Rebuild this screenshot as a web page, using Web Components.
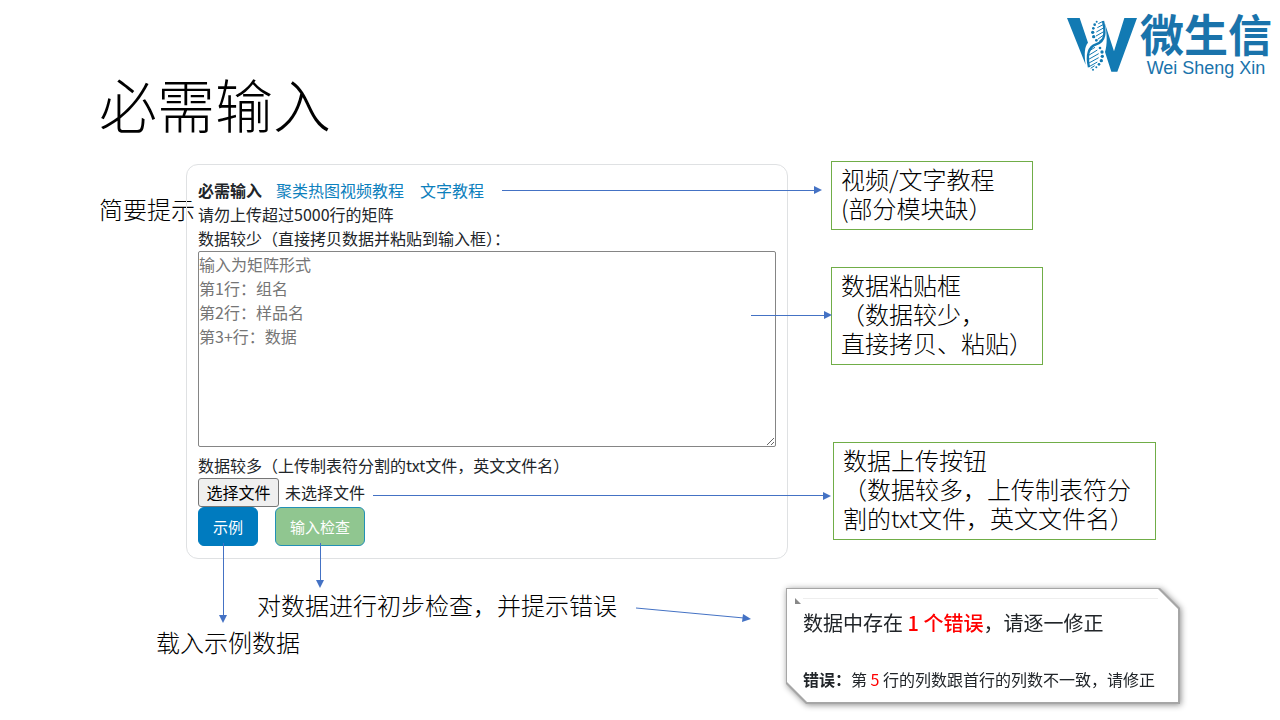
<!DOCTYPE html>
<html lang="zh-CN">
<head>
<meta charset="utf-8">
<meta name="viewport" content="width=device-width, initial-scale=1">
<title>必需输入</title>
<style>
  body { margin: 0; background: #fff; color: #000; font-family: "Noto Sans CJK SC", "Noto Sans", sans-serif; }
</style>
</head>
<body>
<tutorial-slide></tutorial-slide>

<template id="brand-logo">
  <style>
    :host { display: flex; color: #1a73ab; }
    svg { width: 76px; height: 62px; flex: none; margin-top: 1px; }
    .names { display: flex; flex-direction: column; align-items: center; }
    .cn { font-size: 44px; line-height: 40px; font-weight: 700; white-space: nowrap; }
    .en { font: 18px/30px "Liberation Sans", Arial, sans-serif; white-space: nowrap; }
  </style>
  <svg viewBox="0 0 228 186" aria-hidden="true">
    <g fill="#127ab3">
      <path d="M9 12H47L72 86C62 97 60 118 65 152Z"/>
      <path d="M181 12H219L160 173H142L123 114C130 92 130 60 122 26L150 112Z"/>
      <circle cx="98" cy="23" r="3"/><circle cx="92" cy="32" r="4"/><circle cx="88" cy="43" r="4"/><circle cx="86" cy="55" r="5"/><circle cx="89" cy="68" r="5"/><circle cx="97" cy="79" r="4"/>
      <circle cx="108" cy="102" r="4"/><circle cx="114" cy="114" r="5"/><circle cx="115" cy="127" r="5"/><circle cx="112" cy="140" r="5"/><circle cx="105" cy="151" r="4"/><circle cx="97" cy="160" r="3"/><circle cx="87" cy="167" r="3"/>
    </g>
    <path fill="none" stroke="#127ab3" stroke-width="7" d="M117 21C124 52 126 82 96 91C76 98 66 118 75 160"/>
    <g fill="none" stroke="#127ab3" stroke-width="3">
      <path d="M117 22L103 29M119 31L100 41M120 41L97 54M121 52L96 66M119 63L101 76M115 75L106 81"/>
      <path d="M93 100L75 111M100 108L74 124M104 119L74 136M104 131L75 147M100 144L77 157M92 155L80 163"/>
    </g>
  </svg>
  <div class="names"><span class="cn">微生信</span><span class="en">Wei Sheng Xin</span></div>
</template>

<template id="link-arrow">
  <style>
    :host { display: flex; align-items: center; color: #4472c4; pointer-events: none; }
    i { flex: 1; background: currentColor; height: 1px; }
    b { flex: none; border: 4px solid transparent; border-left: 8px solid currentColor; border-right: 0; }
    :host([down]) { flex-direction: column; }
    :host([down]) i { width: 1px; height: auto; }
    :host([down]) b { border: 4px solid transparent; border-top: 8px solid currentColor; border-bottom: 0; }
  </style>
  <i></i><b></b>
</template>

<template id="note-box">
  <style>
    :host { display: block; box-sizing: border-box; border: 1px solid #70ad47; padding: 2px 9px 7px; font-size: 24px; line-height: 29px; font-weight: 300; background: #fff; }
  </style>
  <slot></slot>
</template>

<template id="upload-card">
  <style>
    :host { display: block; box-sizing: border-box; border: 1px solid #dfe1e3; border-radius: 12px; padding: 13px 11px 12px; font-size: 16px; line-height: 24px; color: #212529; }
    .row { display: flex; align-items: center; white-space: nowrap; }
    a { color: #0c80bd; text-decoration: none; }
    .video { margin-left: 14px; }
    .text { margin-left: 16px; }
    .row link-arrow { flex: 1; margin: 0 -46px 0 18px; }
    p, label { display: block; margin: 0; white-space: nowrap; }
    .box { position: relative; display: flex; margin-top: 1px; }
    textarea { box-sizing: border-box; width: 100%; height: 196px; margin: 0; padding: 0; border: 1px solid #858585; border-radius: 2px; font: inherit; background: #fff; outline: 0; }
    textarea::placeholder { color: #757575; }
    .box link-arrow { position: absolute; right: -56px; top: 60px; width: 81px; }
    .filelabel { margin-top: 6px; }
    .file { position: relative; margin-top: 1px; }
    .file input { position: absolute; width: 1px; height: 1px; opacity: 0; margin: 0; }
    .pick { box-sizing: border-box; width: 81px; height: 29px; padding: 0 0 2px; border: 1px solid #767676; border-radius: 3px; background: #efefef; color: #000; font: inherit; }
    output { margin-left: 6px; padding-bottom: 2px; }
    .row.file link-arrow { margin: 4px -55px 0 8px; padding-top: 2px; }
    .actions { display: flex; gap: 17px; }
    .action { position: relative; }
    .action button { box-sizing: border-box; height: 39px; padding: 0 14px; border: 1px solid #007bbd; border-radius: 6px; background: #007bbf; color: #fff; font: inherit; font-size: 15px; }
    .action .check { background: #90c690; border-color: #2390b5; }
    .action link-arrow { position: absolute; left: 21px; top: 36px; height: 80px; }
    .action .short { left: 41px; height: 45px; }
  </style>
  <div class="row"><strong>必需输入</strong><a class="video" href="#video">聚类热图视频教程</a><a class="text" href="#text">文字教程</a><link-arrow></link-arrow></div>
  <p>请勿上传超过5000行的矩阵</p>
  <label for="data">数据较少（直接拷贝数据并粘贴到输入框）：</label>
  <div class="box">
    <textarea id="data" placeholder="输入为矩阵形式&#10;第1行：组名&#10;第2行：样品名&#10;第3+行：数据"></textarea>
    <link-arrow></link-arrow>
  </div>
  <label class="filelabel" for="file">数据较多（上传制表符分割的txt文件，英文文件名）</label>
  <div class="row file">
    <input id="file" type="file" accept=".txt" tabindex="-1">
    <button class="pick" type="button">选择文件</button><output for="file">未选择文件</output><link-arrow></link-arrow>
  </div>
  <div class="actions">
    <div class="action"><button type="button">示例</button><link-arrow down></link-arrow></div>
    <div class="action"><button class="check" type="button">输入检查</button><link-arrow class="short" down></link-arrow></div>
  </div>
</template>

<template id="error-card">
  <style>
    :host { display: block; filter: drop-shadow(1px 1px 3px rgba(0,0,0,.45)); }
    .edge, .face { clip-path: polygon(0 0, calc(100% - 20px) 0, 100% 20px, 100% 100%, 20px 100%, 0 calc(100% - 20px)); }
    .edge { background: #a6a6a6; padding: 1px 2px 2px 1px; }
    .face { background: #fff; padding: 9px 20px 11px 8px; color: #212529; }
    .top { display: flex; gap: 2px; height: 6px; }
    .top i { border-left: 6px solid #888; border-top: 6px solid transparent; }
    .top hr { flex: 1; margin: 0; border: 0; border-top: 1px solid #eee; }
    h2, p { margin: 0 0 0 8px; font-weight: 400; white-space: nowrap; }
    h2 { font-size: 20px; line-height: 30px; margin-top: 4px; }
    p { font-size: 16px; line-height: 24px; margin-top: 29px; }
    em { color: #f00; font-style: normal; }
    h2 em { font-weight: 500; }
  </style>
  <div class="edge"><div class="face">
    <div class="top"><i></i><hr></div>
    <h2>数据中存在 <em>1 个错误</em>，请逐一修正</h2>
    <p><strong>错误：</strong>第 <em>5</em> 行的列数跟首行的列数不一致，请修正</p>
  </div></div>
</template>

<template id="tutorial-slide">
  <style>
    :host { display: block; font-size: 24px; line-height: 29px; font-weight: 300; }
    header { display: flex; justify-content: space-between; align-items: flex-start; padding: 13px 8px 0 99px; }
    h1 { margin: 58px 0 0; font-size: 58px; line-height: 64px; font-weight: 300; }
    main { display: grid; grid-template-columns: 87px minmax(0, 1fr) 492px; align-items: start; margin-top: 26px; padding-left: 99px; }
    .hint { margin: 33px 0 0; white-space: nowrap; }
    upload-card { margin-top: 3px; font-weight: 400; }
    aside { display: flex; flex-direction: column; align-items: flex-start; padding-left: 43px; }
    .tutorial { width: 202px; }
    .paste { width: 212px; margin-top: 37px; }
    .upload { width: 323px; margin: 77px 0 0 2px; }
    footer { display: flex; align-items: flex-start; padding: 29px 100px 14px 156px; }
    .captions { padding-top: 2px; white-space: nowrap; }
    .captions p { margin: 0; }
    .captions p:first-child { margin: 0 0 8px 101px; }
    footer svg { flex: none; width: 115px; height: 16px; margin: 19px 0 0 19px; }
    error-card { width: 394px; margin-left: auto; font-weight: 400; }
  </style>
  <header><h1>必需输入</h1><brand-logo></brand-logo></header>
  <main>
    <p class="hint">简要提示</p>
    <upload-card></upload-card>
    <aside>
      <note-box class="tutorial">视频/文字教程<br>(部分模块缺）</note-box>
      <note-box class="paste">数据粘贴框<br>（数据较少，<br>直接拷贝、粘贴）</note-box>
      <note-box class="upload">数据上传按钮<br>（数据较多，上传制表符分割的txt文件，英文文件名）</note-box>
    </aside>
  </main>
  <footer>
    <div class="captions"><p>对数据进行初步检查，并提示错误</p><p>载入示例数据</p></div>
    <svg viewBox="0 0 115 16" aria-hidden="true"><path d="M0 1L108 11" stroke="#4472c4" fill="none"/><path d="M107 7L115 12L106 15Z" fill="#4472c4"/></svg>
    <error-card></error-card>
  </footer>
</template>

<script>
  class TemplateElement extends HTMLElement {
    constructor() {
      super();
      this.attachShadow({ mode: 'open' }).append(
        document.getElementById(this.localName).content.cloneNode(true));
    }
  }

  class UploadCard extends TemplateElement {
    connectedCallback() {
      const input = this.shadowRoot.querySelector('#file');
      const output = this.shadowRoot.querySelector('output');
      this.shadowRoot.querySelector('.pick').onclick = () => input.click();
      input.onchange = () => { output.textContent = input.files.length ? input.files[0].name : '未选择文件'; };
    }
  }

  customElements.define('brand-logo', class extends TemplateElement {});
  customElements.define('link-arrow', class extends TemplateElement {});
  customElements.define('note-box', class extends TemplateElement {});
  customElements.define('upload-card', UploadCard);
  customElements.define('error-card', class extends TemplateElement {});
  customElements.define('tutorial-slide', class extends TemplateElement {});
</script>
</body>
</html>
